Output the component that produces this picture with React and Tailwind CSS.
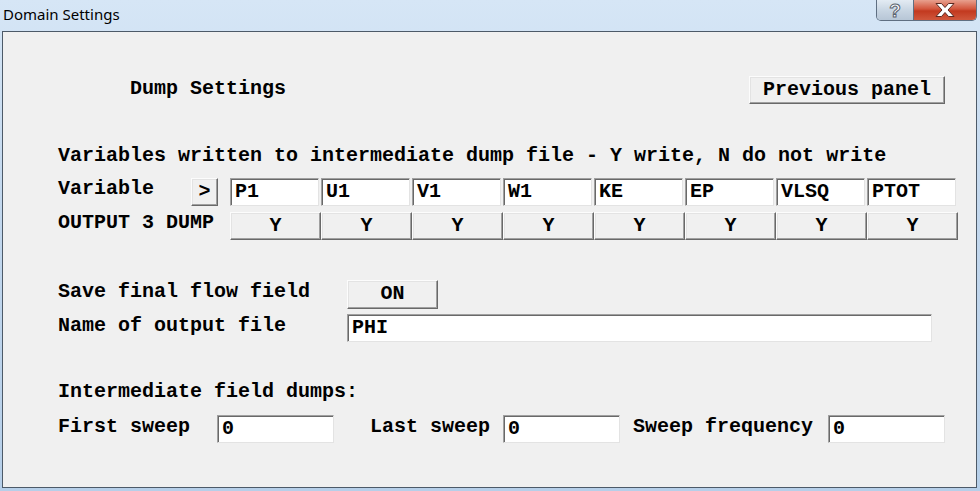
import React from "react";

const mono = { fontFamily: '"Liberation Mono", "Courier New", monospace' };

function Btn({ children, className = "" }) {
  return (
    <div
      className={
        "shrink-0 flex items-center justify-center bg-[#f0f0f0] border border-t-[#fcfcfc] border-l-[#fcfcfc] border-r-[#696969] border-b-[#696969] shadow-[inset_-1px_-1px_0_#a0a0a0,inset_1px_1px_0_#e3e3e3] text-[20px] font-bold text-black " +
        className
      }
    >
      {children}
    </div>
  );
}

function Field({ children, className = "" }) {
  return (
    <div
      className={
        "shrink-0 flex items-center bg-white border border-t-[#a0a0a0] border-l-[#a0a0a0] border-r-[#e3e3e3] border-b-[#e3e3e3] shadow-[inset_1px_1px_0_#696969] pl-[4px] text-[20px] font-bold text-black overflow-hidden " +
        className
      }
    >
      {children}
    </div>
  );
}

export default function App() {
  const vars = ["P1", "U1", "V1", "W1", "KE", "EP", "VLSQ", "PTOT"];
  return (
    <div className="w-[980px] h-[491px] overflow-hidden flex flex-col bg-[linear-gradient(180deg,#d6e6f6_0%,#c3d8ee_40%,#b6cfe9_100%)]">
      {/* title bar */}
      <div className="h-[31px] flex items-start relative">
        <div
          className="pl-[3px] pt-[3px] text-[15px] leading-[22px] text-black"
          style={{ fontFamily: '"Noto Sans", "Open Sans", sans-serif' }}
        >
          Domain Settings
        </div>
        <div className="ml-auto mr-[3px] flex h-[21px] rounded-b-[5px] overflow-hidden border border-t-0 border-[#5f6f82]">
          <div className="w-[37px] flex items-center justify-center bg-[linear-gradient(180deg,#e3ebf3_0%,#c9d6e3_50%,#b7c6d6_100%)] border-r border-[#5f6f82]">
            <span
              className="text-[19px] leading-none font-bold text-white"
              style={{ fontFamily: '"Liberation Sans", sans-serif', WebkitTextStroke: "1px #5a6470" }}
            >
              ?
            </span>
          </div>
          <div className="w-[62px] flex items-center justify-center bg-[linear-gradient(180deg,#e8a08e_0%,#d2553c_45%,#c2391f_55%,#d0573c_100%)]">
            <svg width="24" height="16" viewBox="0 0 24 16">
              <path
                d="M3 1.5 L8.5 1.5 L12 5.5 L15.5 1.5 L21 1.5 L15 8 L21 14.5 L15.5 14.5 L12 10.5 L8.5 14.5 L3 14.5 L9 8 Z"
                fill="#fff"
                stroke="#5b2a22"
                strokeWidth="1"
                strokeLinejoin="round"
              />
            </svg>
          </div>
        </div>
      </div>

      {/* client area */}
      <div
        className="ml-[2px] w-[975px] h-[457px] bg-[#f0f0f0] border border-[#4d5a68] flex flex-col pl-[55px] pr-[10px] text-black"
        style={mono}
      >
        {/* row 1 */}
        <div className="mt-[44px] h-[28px] flex items-center">
          <div className="ml-[72px] text-[20px] font-bold leading-[28px] -mt-[3px]">Dump Settings</div>
          <Btn className="ml-auto mr-[21px] w-[196px] h-[28px] leading-none">Previous panel</Btn>
        </div>

        {/* row 2 */}
        <div className="mt-[38px] h-[28px] flex items-center text-[20px] font-bold leading-[28px] whitespace-nowrap">
          Variables written to intermediate dump file - Y write, N do not write
        </div>

        {/* row 3 */}
        <div className="mt-[8px] h-[28px] flex items-center">
          <div className="shrink-0 w-[133px] text-[20px] font-bold leading-[28px] -mt-[6px]">Variable</div>
          <Btn className="w-[27px] h-[28px]">&gt;</Btn>
          <div className="ml-[12px] flex gap-[2px] shrink-0">
            {vars.map((v) => (
              <Field key={v} className="w-[89px] h-[28px]">
                {v}
              </Field>
            ))}
          </div>
        </div>

        {/* row 4 */}
        <div className="mt-[6px] h-[27px] flex items-center">
          <div className="shrink-0 w-[172px] text-[20px] font-bold leading-[28px] -mt-[5px] whitespace-nowrap">OUTPUT 3 DUMP</div>
          <div className="flex shrink-0">
            {vars.map((v) => (
              <Btn key={v} className="w-[91px] h-[28px]">
                Y
              </Btn>
            ))}
          </div>
        </div>

        {/* row 5 */}
        <div className="mt-[41px] h-[28px] flex items-center">
          <div className="shrink-0 w-[289px] text-[20px] font-bold leading-[28px] -mt-[4px]">Save final flow field</div>
          <Btn className="w-[91px] h-[29px]">ON</Btn>
        </div>

        {/* row 6 */}
        <div className="mt-[6px] h-[27px] flex items-center">
          <div className="shrink-0 w-[289px] text-[20px] font-bold leading-[28px] -mt-[4px]">Name of output file</div>
          <Field className="w-[585px] h-[28px]">PHI</Field>
        </div>

        {/* row 7 */}
        <div className="mt-[37px] h-[28px] flex items-center text-[20px] font-bold leading-[28px]">
          Intermediate field dumps:
        </div>

        {/* row 8 */}
        <div className="mt-[9px] h-[27px] flex items-center">
          <div className="shrink-0 w-[159px] text-[20px] font-bold leading-[28px] -mt-[4px]">First sweep</div>
          <Field className="w-[117px] h-[28px]">0</Field>
          <div className="shrink-0 ml-[36px] w-[133px] text-[20px] font-bold leading-[28px] -mt-[4px]">Last sweep</div>
          <Field className="w-[117px] h-[28px]">0</Field>
          <div className="shrink-0 ml-[13px] w-[195px] text-[20px] font-bold leading-[28px] -mt-[4px]">Sweep frequency</div>
          <Field className="w-[117px] h-[28px]">0</Field>
        </div>
      </div>
    </div>
  );
}
